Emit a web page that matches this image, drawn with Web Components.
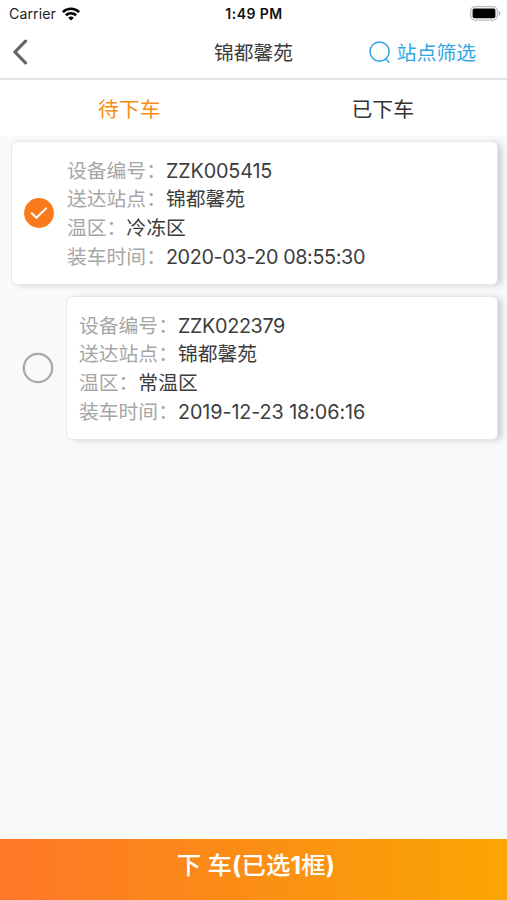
<!DOCTYPE html>
<html lang="zh-CN">
<head>
<meta charset="utf-8">
<title>锦都馨苑</title>
<style>
html,body{margin:0;height:100%}
body{font-family:Inter,"Noto Sans CJK SC",sans-serif;color:#3c3c3c;background:#fafafa}
</style>
</head>
<body>
<unload-page></unload-page>
<script>
const define = (name, html) => customElements.define(name, class extends HTMLElement {
  constructor() {
    super();
    this.attachShadow({ mode: 'open' }).innerHTML = html;
  }
});

define('status-bar', `
<style>
:host{display:grid;grid-template-columns:1fr auto 1fr;align-items:center;height:27px;box-sizing:border-box;padding:0 6px 0 9px;background:#fff;color:#222}
.l{display:flex;align-items:center;gap:6px;font-size:14.2px;letter-spacing:.05px}
.t{font-size:14px;font-weight:600;letter-spacing:.45px;color:#111;margin-right:2px}
.b{justify-self:end}
svg{display:block}
</style>
<div class="l"><span>Carrier</span>
<svg width="18" height="14" viewBox="0 0 18 14" fill="none" stroke="#000" stroke-width="2.6"><path d="M.9 5.1a11.5 11.5 0 0 1 16.2 0"/><path d="M3.9 8.3a7.3 7.3 0 0 1 10.2 0"/><path d="M9 13.6 6.2 10.8a4 4 0 0 1 5.6 0Z" fill="#000" stroke="none"/></svg></div>
<div class="t">1:49 PM</div>
<svg class="b" width="31" height="15" viewBox="0 0 31 15"><rect x=".7" y=".7" width="26.6" height="13.4" rx="4" fill="#fff" stroke="#bbb" stroke-width="1.2"/><rect x="2.6" y="2.6" width="22.8" height="9.6" rx="2" fill="#000"/><path d="M28.8 5.1c2 .7 2 3.9 0 4.6Z" fill="#aaa"/></svg>`);

define('nav-bar', `
<style>
:host{display:grid;grid-template-columns:1fr auto 1fr;align-items:center;height:53px;box-sizing:border-box;padding:0 31px 0 11px;background:#fff;border-bottom:2px solid #e4e4e4}
.title{font-size:19.8px;line-height:28px;margin-left:20px}
.filter{display:flex;align-items:center;justify-self:end;gap:6px;font-size:19.8px;line-height:28px;color:#2fa5e4}
svg{display:block;margin-bottom:2px}
.title,.filter span{padding-top:1px}
</style>
<svg width="18" height="26" viewBox="0 0 18 26" fill="none" stroke="#666" stroke-width="3.2" stroke-linecap="round" stroke-linejoin="miter"><path d="M14.5 2.2 4 13 14.5 23.8"/></svg>
<div class="title"><slot></slot></div>
<div class="filter"><svg width="22" height="24" viewBox="0 0 22 24" fill="none" stroke="#2fa5e4" stroke-width="1.5"><circle cx="10.6" cy="11.6" r="9.6"/><path d="m16.4 18.6 3.8 3.9"/></svg><span><slot name="action"></slot></span></div>`);

define('tab-bar', `
<style>
:host{display:grid;grid-template-columns:1fr 1fr;height:56px;background:#fff;color:#333;font-size:20.8px}
::slotted(*){display:grid;place-items:center;padding:0 0 1px 5px}
::slotted([active]){color:#fa8c16}
</style><slot></slot>`);

define('info-row', `
<style>
:host{display:flex;height:28.75px;line-height:28.75px;font-size:19.8px;white-space:nowrap}
</style><slot name="label"></slot><span><slot></slot></span>`);

define('row-label', `<style>:host{display:block;color:#a6a6a6;letter-spacing:0}</style><slot></slot>`);

define('check-mark', `
<style>
:host{display:block;width:32px;height:32px}
svg{display:block}
.on{display:none}
:host([checked]) .on{display:block}
:host([checked]) .off{display:none}
</style>
<svg class="on" width="32" height="32" viewBox="0 0 32 32"><circle cx="16" cy="16" r="14.9" fill="#f97b1b"/><path d="m8.7 16.2 4.8 4.5 9.6-9.3" fill="none" stroke="#fff" stroke-width="2" stroke-linecap="round" stroke-linejoin="round"/></svg>
<svg class="off" width="32" height="32" viewBox="0 0 32 32"><circle cx="16" cy="16" r="14.2" fill="none" stroke="#aaa" stroke-width="2.3"/></svg>`);

define('box-card', `
<style>
:host{display:block;box-sizing:border-box;height:142px;padding:14.5px 12px 12.5px 11px;background:#fff;border-radius:5px;box-shadow:0 0 0 1px #e8e8e8,5px 1px 7px rgba(0,0,0,.18)}
:host([inner]){padding-left:12.5px}
.in{display:flex;align-items:center;gap:12px;height:115px}
slot[name=mark]::slotted(*){margin-top:-2px}
</style><div class="in"><slot name="mark"></slot><div><slot></slot></div></div>`);

define('submit-bar', `
<style>
:host{display:block;height:61px;box-sizing:border-box;padding-top:9px;padding-left:5px;text-align:center;color:#fff;background:linear-gradient(90deg,#ff7729,#fb8a17 42%,#fba603);font-size:24.4px;line-height:34px;font-weight:500}
::slotted(b){font-weight:700;letter-spacing:.4px}
</style><slot></slot>`);

define('unload-page', `
<style>
:host{display:flex;flex-direction:column;height:900px;overflow:hidden;background:#fafafa}
.list{flex:1;display:flex;flex-direction:column;gap:13px;padding:6px 10.5px 0 12px}
.line{display:flex;align-items:center;gap:12.5px;padding-left:10px}
.line box-card{flex:1}
</style>
<status-bar></status-bar>
<nav-bar>锦都馨苑<span slot="action">站点筛选</span></nav-bar>
<tab-bar><span active>待下车</span><span>已下车</span></tab-bar>
<div class="list">
<box-card><check-mark slot="mark" checked></check-mark>
<info-row style="letter-spacing:-.15px"><row-label slot="label">设备编号：</row-label>ZZK005415</info-row>
<info-row><row-label slot="label">送达站点：</row-label>锦都馨苑</info-row>
<info-row><row-label slot="label">温区：</row-label>冷冻区</info-row>
<info-row style="letter-spacing:-.38px"><row-label slot="label">装车时间：</row-label>2020-03-20 08:55:30</info-row></box-card>
<div class="line"><check-mark></check-mark>
<box-card inner>
<info-row style="letter-spacing:-.35px"><row-label slot="label">设备编号：</row-label>ZZK022379</info-row>
<info-row><row-label slot="label">送达站点：</row-label>锦都馨苑</info-row>
<info-row><row-label slot="label">温区：</row-label>常温区</info-row>
<info-row style="letter-spacing:-.1px"><row-label slot="label">装车时间：</row-label>2019-12-23 18:06:16</info-row></box-card></div>
</div>
<submit-bar>下 车<b>(</b>已选<b>1</b>框<b>)</b></submit-bar>`);
</script>
</body>
</html>
